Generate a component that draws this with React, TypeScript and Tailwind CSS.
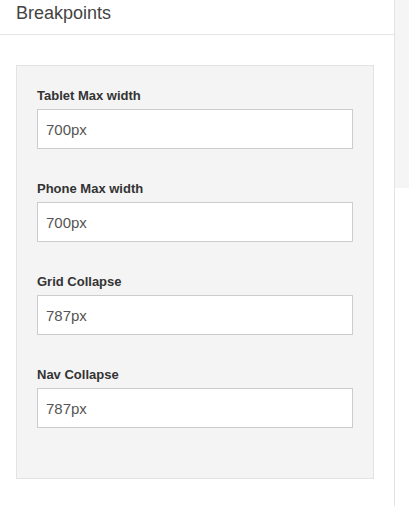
const fields = [
  { label: 'Tablet Max width', value: '700px' },
  { label: 'Phone Max width', value: '700px' },
  { label: 'Grid Collapse', value: '787px' },
  { label: 'Nav Collapse', value: '787px' },
]

export default function App() {
  return (
    <div
      className="flex h-[506px] w-[409px] bg-white"
      style={{ fontFamily: '"Liberation Sans", Arial, sans-serif' }}
    >
      {/* Panel */}
      <div className="flex h-full w-[395px] flex-col border-r border-[#e3e3e3]">
        <div className="h-[35px] border-b border-[#e6e6e6] px-4 pt-px">
          <h2 className="text-[18px] leading-[24px] text-[#444]">Breakpoints</h2>
        </div>

        <div className="ml-4 mt-[30px] w-[358px] border border-[#e3e3e3] bg-[#f4f4f4] px-5 pb-[50px] pt-[22px]">
          {fields.map((field, i) => (
            <div key={field.label} className={i > 0 ? 'mt-[32px]' : ''}>
              <label className="block text-[13px] font-bold leading-[16px] text-[#333]">
                {field.label}
              </label>
              <input
                type="text"
                defaultValue={field.value}
                className="mt-[5px] block h-[40px] w-full border border-[#cccccc] bg-white px-[8px] text-[15px] text-[#555] outline-none"
              />
            </div>
          ))}
        </div>
      </div>

      {/* Side strip */}
      <div className="flex-1">
        <div className="h-[188px] bg-[#f5f5f5]" />
      </div>
    </div>
  )
}
